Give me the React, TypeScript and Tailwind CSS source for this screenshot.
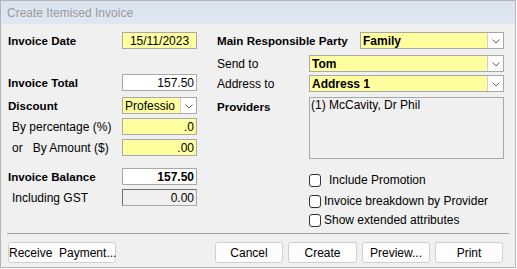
import {ReactNode} from "react";

const font = "font-['Liberation_Sans',Arial,sans-serif]";

function Chevron() {
    return (
        <svg width="8" height="5" viewBox="0 0 8 5" className="mt-[1px]">
            <polyline points="0.5,0.5 4,4 7.5,0.5" fill="none" stroke="#666" strokeWidth="1"/>
        </svg>
    );
}

function Field({value, tone = "yellow", align = "right", bold = false}: {
    value: string;
    tone?: "yellow" | "white" | "disabled";
    align?: "right" | "center";
    bold?: boolean;
}) {
    const bg = tone === "yellow" ? "bg-[#ffffa0] border-[#a8a8a8]"
        : tone === "white" ? "bg-white border-[#a8a8a8]"
            : "bg-[#f0f0f0] border-[#a8a8a8] border-t-[#6e6e6e] border-l-[#6e6e6e]";
    return (
        <div className={`w-[75px] h-[17px] border ${bg} flex items-center px-[2px] text-[12px] leading-none ${align === "center" ? "justify-center" : "justify-end"} ${bold ? "font-bold" : ""}`}>
            {value}
        </div>
    );
}

function Select({value, width, bold = true}: {value: string; width: string; bold?: boolean}) {
    return (
        <div className={`${width} h-[17px] border border-[#a8a8a8] bg-[#ffffa0] flex items-stretch text-[12px] leading-none`}>
            <div className={`flex-1 min-w-0 whitespace-nowrap flex items-center pl-[2px] ${bold ? "font-bold" : ""}`}>{value}</div>
            <div className="w-[16px] bg-white border-l border-[#d0d0d0] flex items-center justify-center">
                <Chevron/>
            </div>
        </div>
    );
}

function Row({label, children, className = "", bold = false}: {label: ReactNode; children: ReactNode; className?: string; bold?: boolean}) {
    return (
        <div className={`flex items-center justify-between h-[17px] ${className}`}>
            <span className={bold ? "font-bold text-[11.6px]" : "text-[12px] pl-[4px]"}>{label}</span>
            {children}
        </div>
    );
}

function Check({label, gap}: {label: string; gap: string}) {
    return (
        <label className={`flex items-center ${gap} h-[14px] text-[12px]`}>
            <span className="w-[12px] h-[13px] border border-[#333] rounded-[3px] bg-white"/>
            <span>{label}</span>
        </label>
    );
}

function Button({children, className = ""}: {children: ReactNode; className?: string}) {
    return (
        <button type="button" className={`h-[21px] rounded-[3px] border border-[#cfcfcf] bg-[#fdfdfd] text-[12px] leading-none whitespace-pre ${className}`}>
            {children}
        </button>
    );
}

export default function App() {
    return (
        <div className={`w-[517px] h-[269px] bg-white ${font} text-black`}>
            <div className="w-[516px] h-[268px] border border-[#b4b4b4] bg-[#f0f0f0] flex flex-col">
                <div className="h-[23px] bg-[linear-gradient(#d9e4f0,#dfe8f2)] flex items-center pl-[6px] text-[12px] text-[#9a9a9a]">
                    Create Itemised Invoice
                </div>
                <div className="flex pt-[8px] pl-[7px] h-[208px]">
                    {/* left column */}
                    <div className="w-[189px] flex flex-col">
                        <Row label="Invoice Date" bold><Field value="15/11/2023" align="center"/></Row>
                        <Row label="Invoice Total" bold className="mt-[25px]"><Field value="157.50" tone="white"/></Row>
                        <Row label="Discount" bold className="mt-[6px]"><Select value="Professio" width="w-[75px]" bold={false}/></Row>
                        <Row label="By percentage (%)" className="mt-[4px]"><Field value=".0"/></Row>
                        <Row label={<span className="whitespace-pre">or   By Amount ($)</span>} className="mt-[4px]"><Field value=".00"/></Row>
                        <Row label="Invoice Balance" bold className="mt-[12px]"><Field value="157.50" tone="white" bold/></Row>
                        <Row label="Including GST" className="mt-[4px]"><Field value="0.00" tone="disabled"/></Row>
                    </div>
                    {/* right column */}
                    <div className="ml-[20px] w-[287px] flex flex-col">
                        <div className="flex items-center justify-between h-[17px]">
                            <span className="font-bold text-[11.6px]">Main Responsible Party</span>
                            <Select value="Family" width="w-[144px]"/>
                        </div>
                        <div className="flex items-center justify-between h-[17px] mt-[6px] text-[12px]">
                            <span>Send to</span>
                            <Select value="Tom" width="w-[195px]"/>
                        </div>
                        <div className="flex items-center justify-between h-[17px] mt-[3px] text-[12px]">
                            <span>Address to</span>
                            <Select value="Address 1" width="w-[195px]"/>
                        </div>
                        <div className="flex justify-between mt-[5px]">
                            <span className="font-bold text-[11.6px] mt-[1px]">Providers</span>
                            <div className="w-[195px] h-[62px] border border-[#a8a8a8] bg-[#f0f0f0] text-[12px] pl-[1px] leading-[14px]">
                                (1) McCavity, Dr Phil
                            </div>
                        </div>
                        <div className="ml-[92px] flex flex-col mt-[14px]">
                            <Check label="Include Promotion" gap="gap-[8px]"/>
                            <div className="mt-[7px]"><Check label="Invoice breakdown by Provider" gap="gap-[3px]"/></div>
                            <div className="mt-[5px]"><Check label="Show extended attributes" gap="gap-[3px]"/></div>
                        </div>
                    </div>
                </div>
                <div className="mx-[6px] mt-[1px] border-t border-[#a0a0a0]"/>
                <div className="flex items-center pl-[7px] pr-[12px] mt-[8px]">
                    <Button className="w-[108px]">Receive  Payment...</Button>
                    <div className="flex-1"/>
                    <div className="flex gap-[5px]">
                        <Button className="w-[68px]">Cancel</Button>
                        <Button className="w-[69px] bg-[#f4f8fc] border-[#c4d2e0]">Create</Button>
                        <Button className="w-[68px]">Preview...</Button>
                        <Button className="w-[68px]">Print</Button>
                    </div>
                </div>
            </div>
        </div>
    );
}
